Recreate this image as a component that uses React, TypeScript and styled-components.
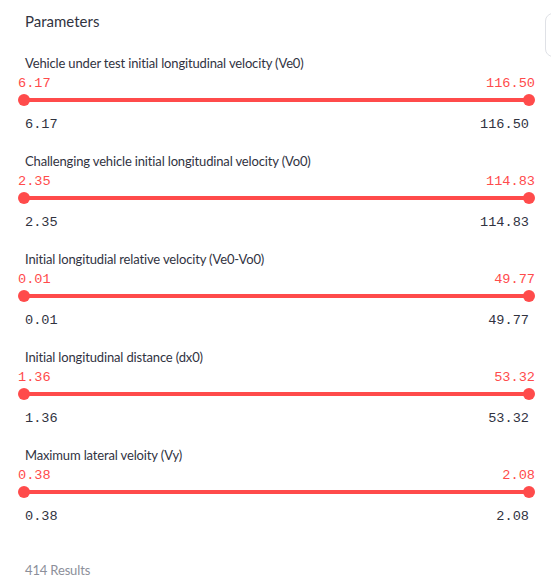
import React, { FC } from 'react'
import styled, { createGlobalStyle } from 'styled-components'

const RED = '#ff4b4b'
const TEXT = '#31333f'
const THUMB = 12

type Range = {
  label: string
  low: string
  high: string
}

const ranges: Range[] = [
  { label: 'Vehicle under test initial longitudinal velocity (Ve0)', low: '6.17', high: '116.50' },
  { label: 'Challenging vehicle initial longitudinal velocity (Vo0)', low: '2.35', high: '114.83' },
  { label: 'Initial longitudial relative velocity (Ve0-Vo0)', low: '0.01', high: '49.77' },
  { label: 'Initial longitudinal distance (dx0)', low: '1.36', high: '53.32' },
  { label: 'Maximum lateral veloity (Vy)', low: '0.38', high: '2.08' },
]

const GlobalStyle = createGlobalStyle`
  body {
    margin: 0;
    background: #ffffff;
    font-family: Lato, 'Noto Sans', sans-serif;
    color: ${TEXT};
  }
`

const RangeSlider: FC<Range> = ({ label, low, high }) => (
  <Block>
    <Label>{label}</Label>
    <ValueRow>
      <span>{low}</span>
      <span>{high}</span>
    </ValueRow>
    <Track>
      <Thumb />
      <Bar />
      <Thumb />
    </Track>
    <TickRow>
      <span>{low}</span>
      <span>{high}</span>
    </TickRow>
  </Block>
)

const App: FC = () => (
  <>
    <GlobalStyle />
    <Page>
      <Sidebar>
        <Title>Parameters</Title>
        <Sliders>
          {ranges.map(r => (
            <RangeSlider key={r.label} {...r} />
          ))}
        </Sliders>
        <Results>414 Results</Results>
      </Sidebar>
      <CornerButton />
    </Page>
  </>
)

export default App

const Page = styled.div`
  display: flex;
  align-items: flex-start;
  width: 551px;
  height: 587px;
  overflow: hidden;
`
const Sidebar = styled.div`
  width: 517px;
  padding: 10px 0 0 18px;
  flex-shrink: 0;
`
const Title = styled.div`
  padding-left: 7px;
  font-size: 15px;
  line-height: 22px;
`
const Sliders = styled.div`
  display: flex;
  flex-direction: column;
  gap: 18px;
  margin-top: 21px;
`
const Block = styled.div`
  display: flex;
  flex-direction: column;
`
const Label = styled.div`
  padding-left: 7px;
  font-size: 13px;
  letter-spacing: -0.15px;
  line-height: 20px;
`
const ValueRow = styled.div`
  display: flex;
  justify-content: space-between;
  margin-top: 3px;
  font-family: 'Liberation Mono', monospace;
  font-size: 13.6px;
  line-height: 16px;
  color: ${RED};
`
const Track = styled.div`
  display: flex;
  align-items: center;
  height: 16px;
`
const Thumb = styled.div`
  width: ${THUMB}px;
  height: ${THUMB}px;
  border-radius: 50%;
  background: ${RED};
  flex-shrink: 0;
`
const Bar = styled.div`
  flex: 1;
  height: 4px;
  margin: 0 -2px;
  background: ${RED};
`
const TickRow = styled.div`
  display: flex;
  justify-content: space-between;
  margin-top: 9px;
  padding: 0 6px 0 7px;
  font-family: 'Liberation Mono', monospace;
  font-size: 13.6px;
  line-height: 16px;
  color: ${TEXT};
`
const Results = styled.div`
  margin-top: 35px;
  padding-left: 7px;
  font-size: 13px;
  letter-spacing: -0.15px;
  line-height: 20px;
  color: #8c8f9a;
`
const CornerButton = styled.div`
  margin: 13px 0 0 10px;
  width: 40px;
  height: 44px;
  flex-shrink: 0;
  border: 1px solid #dfe1e6;
  border-radius: 8px;
  box-sizing: border-box;
`
